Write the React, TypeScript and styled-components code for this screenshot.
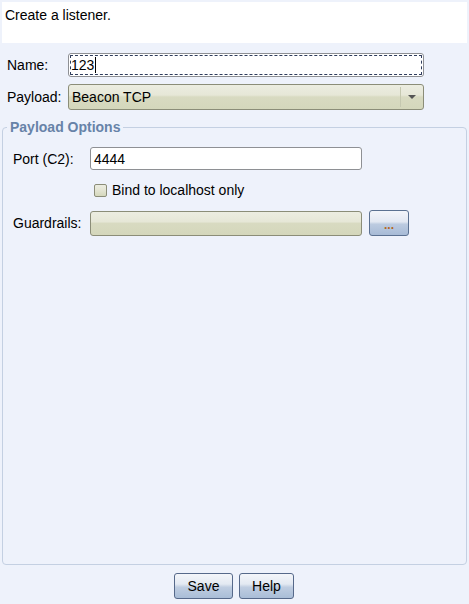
import React from "react";
import styled, { createGlobalStyle } from "styled-components";

const Global = createGlobalStyle`
  html, body { margin: 0; padding: 0; background: #eef2fb; }
  body { font-family: "Liberation Sans", Arial, sans-serif; font-size: 14px; color: #000; }
  * { box-sizing: border-box; }
`;

const Window = styled.div`
  width: 469px;
  height: 604px;
  display: flex;
  flex-direction: column;
  background: #eef2fb;
`;

const Header = styled.div`
  margin: 2px 2px 0 2px;
  height: 41px;
  background: #ffffff;
  padding: 5px 3px;
  line-height: 16px;
`;

const TopForm = styled.div`
  display: grid;
  grid-template-columns: 61px 356px;
  row-gap: 7px;
  padding: 10px 0 0 7px;
  align-items: center;
`;

const Label = styled.label`
  white-space: nowrap;
  line-height: 16px;
`;

const TextField = styled.div<{ $focused?: boolean; $w?: number }>`
  height: ${(p) => (p.$focused ? 24 : 23)}px;
  width: ${(p) => (p.$w ? `${p.$w}px` : "100%")};
  background: #ffffff;
  border: 1px solid #8e9094;
  border-radius: 3px;
  display: flex;
  align-items: center;
  padding-left: ${(p) => (p.$focused ? 2 : 3)}px;
  ${(p) =>
    p.$focused
      ? `outline: 1px dashed #2f3d5c; outline-offset: -3px;`
      : ""}
`;

const Caret = styled.span`
  display: inline-block;
  width: 1px;
  height: 16px;
  background: #000;
  margin-left: 1px;
`;

const ComboBox = styled.div<{ $w?: number; $plain?: boolean }>`
  height: ${(p) => (p.$plain ? 25 : 26)}px;
  width: ${(p) => (p.$w ? `${p.$w}px` : "100%")};
  border: 1px solid #8b8d78;
  border-radius: 3px;
  background: linear-gradient(
    #ecede1 0%,
    #e6e7d7 42%,
    #d8dac1 50%,
    #d4d7bb 100%
  );
  display: flex;
  align-items: center;
`;

const ComboText = styled.span`
  flex: 1;
  padding-left: 3px;
`;

const ArrowBox = styled.div`
  width: 22px;
  height: 20px;
  margin-right: 1px;
  border-left: 1px solid #c5c8b0;
  display: flex;
  align-items: center;
  justify-content: center;
`;

const Arrow = styled.div`
  width: 0;
  height: 0;
  border-left: 4px solid transparent;
  border-right: 4px solid transparent;
  border-top: 4px solid #555;
`;

const Group = styled.fieldset`
  flex: 1;
  margin: 9px 2px 0 2px;
  padding: 12px 0 0 10px;
  border: 1px solid #c4d0e2;
  border-radius: 4px;
  display: flex;
  flex-direction: column;
  min-width: 0;
`;

const Legend = styled.legend`
  color: #6783a8;
  font-weight: bold;
  font-size: 14px;
  line-height: 16px;
  padding: 0 3px 0 3px;
  margin-left: -6px;
`;

const Row = styled.div<{ $mt?: number }>`
  display: flex;
  align-items: center;
  margin-top: ${(p) => p.$mt ?? 0}px;
`;

const GroupLabel = styled.label`
  width: 77px;
  white-space: nowrap;
`;

const CheckRow = styled.label`
  display: flex;
  align-items: center;
  margin-left: 81px;
  gap: 5px;
  height: 20px;
`;

const CheckBox = styled.span`
  width: 13px;
  height: 13px;
  border: 1px solid #8b8d78;
  border-radius: 2px;
  background: linear-gradient(#ecede1 0%, #e4e5d4 45%, #d5d8bc 100%);
`;

const SmallButton = styled.button`
  margin-left: 7px;
  width: 40px;
  height: 26px;
  border: 1px solid #5b7191;
  border-radius: 3px;
  background: linear-gradient(
    #f3f5fa 0%,
    #e2e8f2 45%,
    #bccbe0 55%,
    #a7bbd6 100%
  );
  color: #b5651d;
  font-family: "Liberation Sans", Arial, sans-serif;
  font-size: 12px;
  font-weight: bold;
  padding: 3px 0 0 0;
  display: flex;
  align-items: center;
  justify-content: center;
`;

const Footer = styled.div`
  display: flex;
  justify-content: center;
  gap: 6px;
  padding: 8px 0 5px 0;
  margin-left: -1px;
`;

const Button = styled.button<{ $w: number }>`
  width: ${(p) => p.$w}px;
  height: 26px;
  border: 1px solid #56698a;
  border-radius: 3px;
  background: linear-gradient(
    #f4f6fa 0%,
    #e3e9f2 42%,
    #bfcde1 55%,
    #a9bdd7 100%
  );
  font-family: "Liberation Sans", Arial, sans-serif;
  font-size: 14px;
  color: #000;
  padding: 0;
`;

export default function App() {
  return (
    <>
      <Global />
      <Window>
        <Header>Create a listener.</Header>
        <TopForm>
          <Label>Name:</Label>
          <TextField $focused>
            123
            <Caret />
          </TextField>
          <Label>Payload:</Label>
          <ComboBox>
            <ComboText>Beacon TCP</ComboText>
            <ArrowBox>
              <Arrow />
            </ArrowBox>
          </ComboBox>
        </TopForm>
        <Group>
          <Legend>Payload Options</Legend>
          <Row>
            <GroupLabel>Port (C2):</GroupLabel>
            <TextField $w={272}>4444</TextField>
          </Row>
          <Row $mt={10}>
            <CheckRow>
              <CheckBox />
              Bind to localhost only
            </CheckRow>
          </Row>
          <Row $mt={10}>
            <GroupLabel>Guardrails:</GroupLabel>
            <ComboBox $w={272} $plain />
            <SmallButton>...</SmallButton>
          </Row>
        </Group>
        <Footer>
          <Button $w={59}>Save</Button>
          <Button $w={55}>Help</Button>
        </Footer>
      </Window>
    </>
  );
}
